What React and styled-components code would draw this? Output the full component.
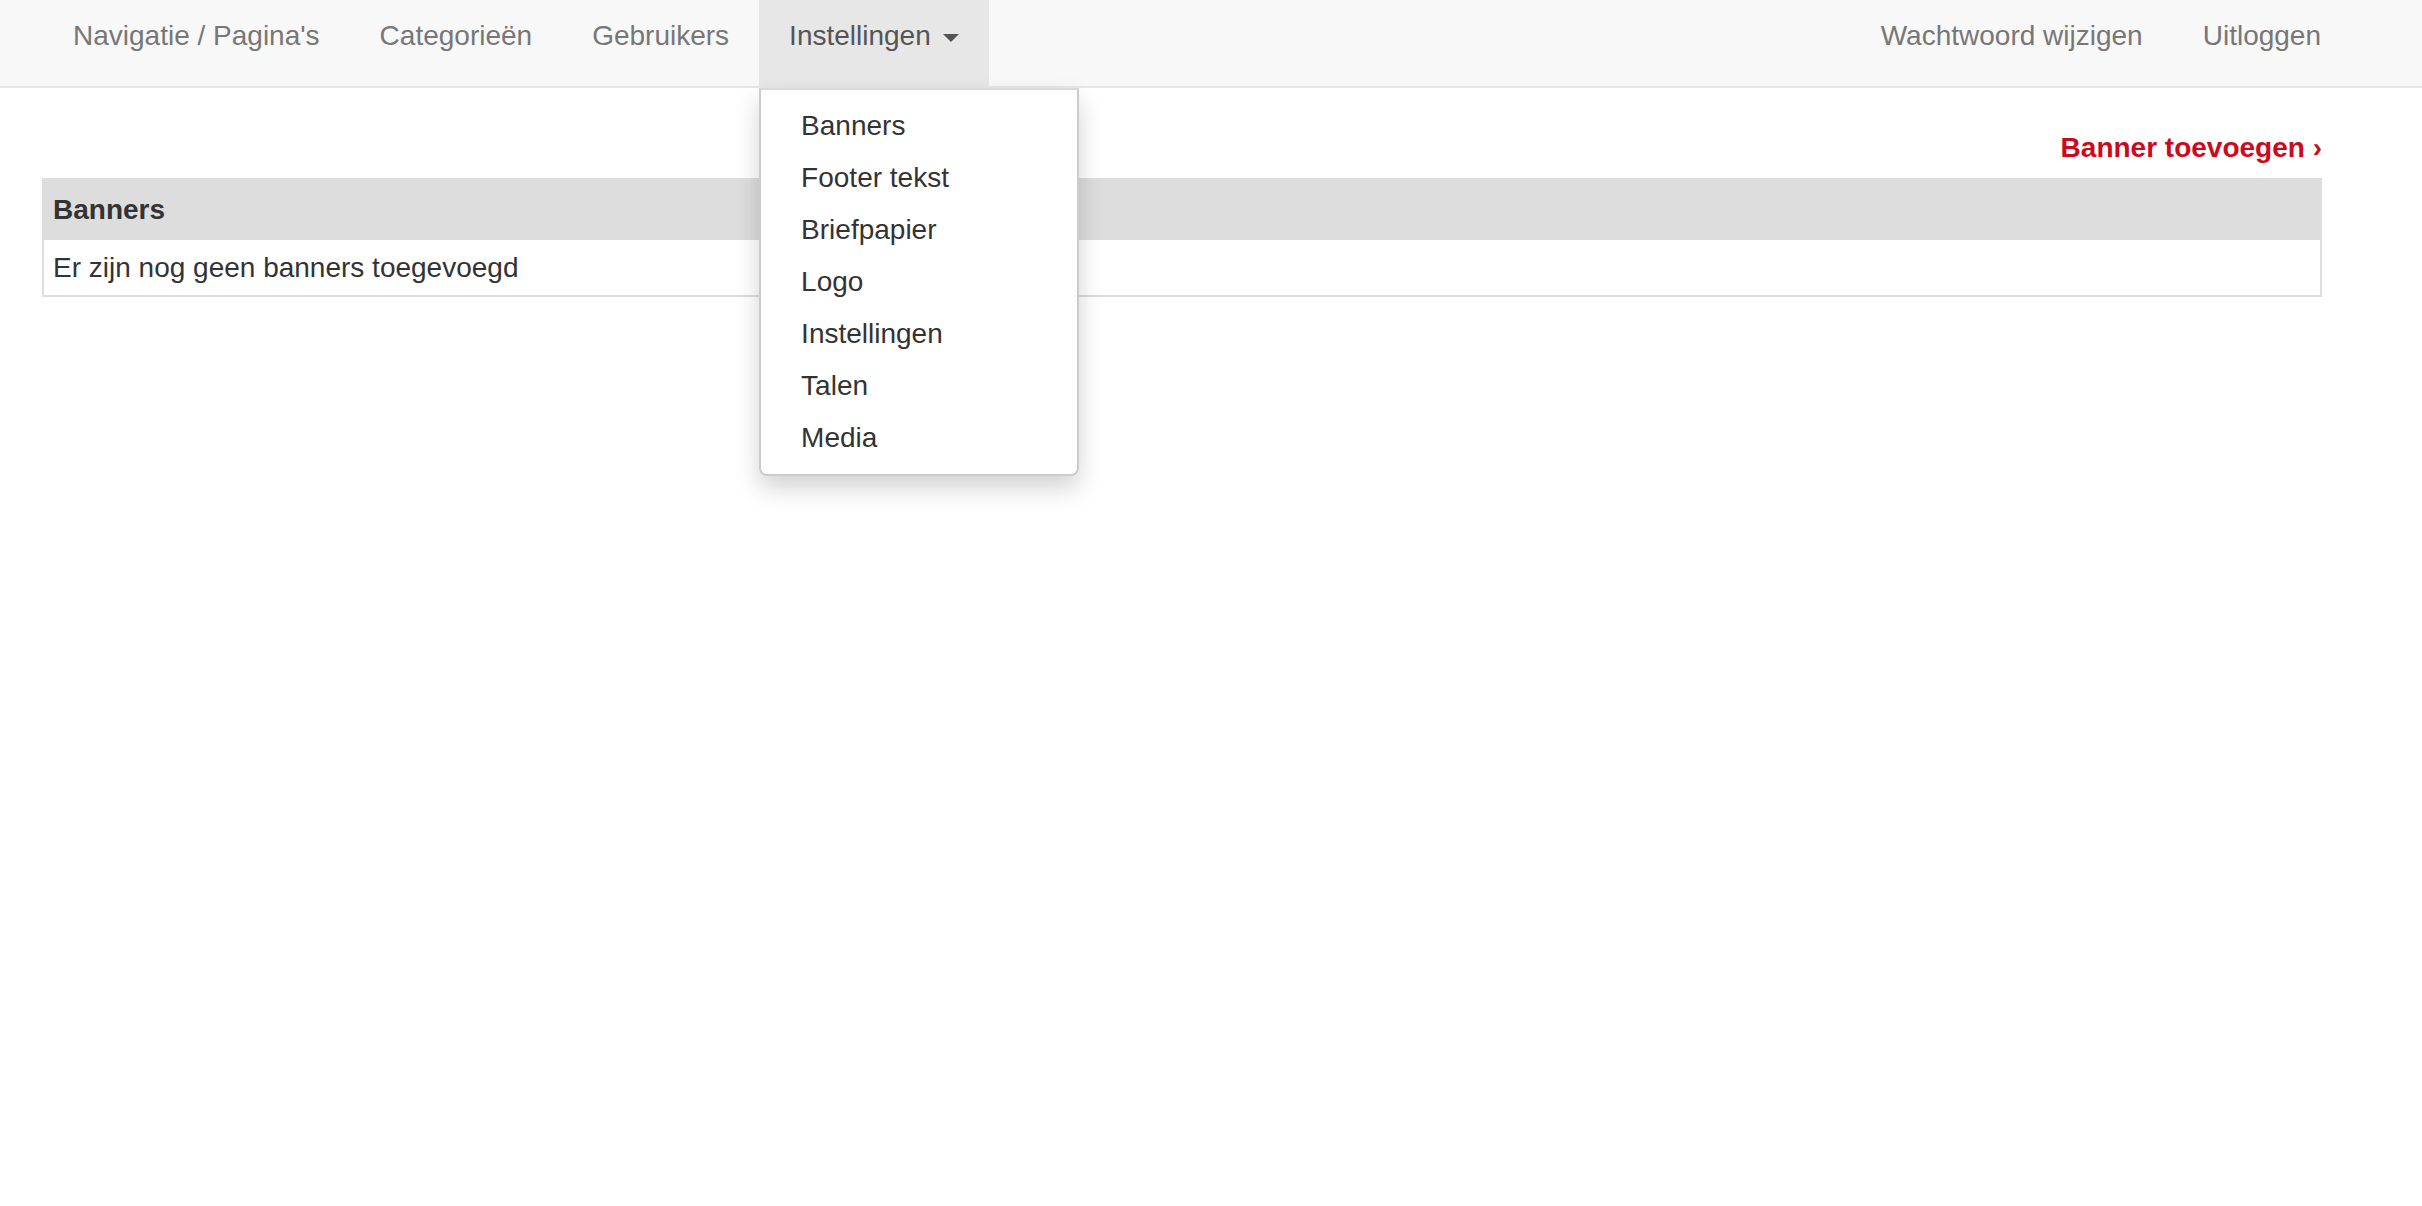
import React from "react";
import styled, { createGlobalStyle } from "styled-components";

const GlobalStyle = createGlobalStyle`
  html, body {
    margin: 0;
    padding: 0;
    background: #ffffff;
    min-height: 100%;
    height: 100%;
  }
  body {
    font-family: "Liberation Sans", Helvetica, Arial, sans-serif;
    font-size: 28px;
    line-height: 40px;
    color: #333333;
  }
  #root {
    min-height: 100vh;
  }
  * { box-sizing: border-box; }
`;

const Page = styled.div`
  min-height: 1206px;
  background: #ffffff;
`;

const Navbar = styled.nav`
  position: relative;
  z-index: 5;
  display: flex;
  justify-content: space-between;
  align-items: stretch;
  height: 88px;
  background: #f8f8f8;
  border-bottom: 2px solid #e7e7e7;
  padding: 0 71px 0 43px;
`;

const NavGroup = styled.ul`
  display: flex;
  margin: 0;
  padding: 0;
  list-style: none;
`;

const NavItem = styled.li`
  position: relative;
  display: flex;
`;

const NavLink = styled.a`
  display: block;
  height: 86px;
  padding: 16px 30px 0;
  line-height: 40px;
  color: ${(p) => (p.$active ? "#555555" : "#777777")};
  background: ${(p) => (p.$active ? "#e7e7e7" : "transparent")};
  text-decoration: none;
  white-space: nowrap;
  cursor: pointer;
`;

const Caret = styled.span`
  display: inline-block;
  width: 0;
  height: 0;
  margin-left: 4px;
  vertical-align: middle;
  border-top: 8px solid #555555;
  border-left: 8px solid transparent;
  border-right: 8px solid transparent;
`;

const Dropdown = styled.ul`
  position: absolute;
  top: 88px;
  left: 0;
  z-index: 10;
  min-width: 320px;
  margin: 0;
  padding: 10px 0;
  list-style: none;
  background: #ffffff;
  border: 2px solid rgba(0, 0, 0, 0.2);
  border-top-color: rgba(0, 0, 0, 0.15);
  border-radius: 0 0 8px 8px;
  box-shadow: 0 12px 24px rgba(0, 0, 0, 0.175);
`;

const DropdownLink = styled.a`
  display: block;
  padding: 6px 40px;
  line-height: 40px;
  color: #333333;
  text-decoration: none;
  white-space: nowrap;
`;

const Container = styled.main`
  padding: 40px 100px 0 42px;
`;

const ActionRow = styled.div`
  display: flex;
  justify-content: flex-end;
  line-height: 40px;
  margin-bottom: 10px;
`;

const ActionLink = styled.a`
  color: #cc0a1c;
  font-weight: bold;
  text-decoration: none;
`;

const Table = styled.table`
  width: 100%;
  border-collapse: collapse;
  border: 2px solid #dddddd;
`;

const HeadCell = styled.th`
  background: #dddddd;
  text-align: left;
  font-weight: bold;
  color: #333333;
  padding: 10px 9px;
  line-height: 40px;
`;

const Cell = styled.td`
  padding: 8px 9px 7px;
  line-height: 40px;
  color: #333333;
`;

const leftItems = ["Navigatie / Pagina's", "Categorieën", "Gebruikers"];
const dropdownItems = [
  "Banners",
  "Footer tekst",
  "Briefpapier",
  "Logo",
  "Instellingen",
  "Talen",
  "Media",
];

export default function App() {
  return (
    <Page>
      <GlobalStyle />
      <Navbar>
        <NavGroup>
          {leftItems.map((item) => (
            <NavItem key={item}>
              <NavLink>{item}</NavLink>
            </NavItem>
          ))}
          <NavItem>
            <NavLink $active>
              Instellingen <Caret />
            </NavLink>
            <Dropdown>
              {dropdownItems.map((item) => (
                <li key={item}>
                  <DropdownLink>{item}</DropdownLink>
                </li>
              ))}
            </Dropdown>
          </NavItem>
        </NavGroup>
        <NavGroup>
          <NavItem>
            <NavLink>Wachtwoord wijzigen</NavLink>
          </NavItem>
          <NavItem>
            <NavLink>Uitloggen</NavLink>
          </NavItem>
        </NavGroup>
      </Navbar>
      <Container>
        <ActionRow>
          <ActionLink>Banner toevoegen ›</ActionLink>
        </ActionRow>
        <Table>
          <thead>
            <tr>
              <HeadCell>Banners</HeadCell>
            </tr>
          </thead>
          <tbody>
            <tr>
              <Cell>Er zijn nog geen banners toegevoegd</Cell>
            </tr>
          </tbody>
        </Table>
      </Container>
    </Page>
  );
}
